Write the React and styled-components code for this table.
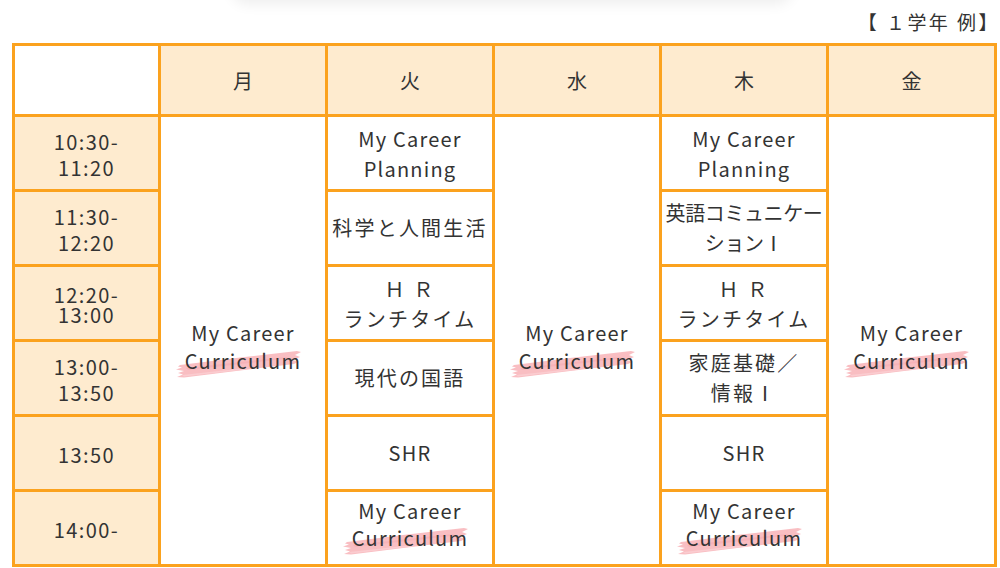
import React from "react";
import styled, { createGlobalStyle } from "styled-components";

const Global = createGlobalStyle`
  html, body { margin: 0; padding: 0; background: #fff; }
  body {
    font-family: "Noto Sans CJK JP", "Noto Sans", sans-serif;
    color: #333;
    overflow: hidden;
  }
`;

const ORANGE = "#FBA21E";
const PEACH = "#FEEBCF";

const Page = styled.div`
  width: 1000px;
  height: 568px;
  overflow: hidden;
  position: relative;
`;

const TopShade = styled.div`
  width: 560px;
  height: 30px;
  margin: -30px 0 0 232px;
  border-radius: 20px;
  box-shadow: 0 4px 14px rgba(0, 0, 0, 0.07);
`;

const Caption = styled.div`
  text-align: right;
  font-size: 19px;
  line-height: 24px;
  padding: 10px 0 9px 0;
  letter-spacing: 0.13em;
`;

const TableWrap = styled.div`
  padding-left: 12px;
`;

const Table = styled.table`
  border-collapse: collapse;
  table-layout: fixed;
  width: 982px;
  border: 3px solid ${ORANGE};
`;

const HeadRow = styled.tr`
  height: 71px;
`;

const BodyRow = styled.tr`
  height: 75px;
`;

const HeadCell = styled.th`
  background: ${({ $blank }) => ($blank ? "#fff" : PEACH)};
  border: 3px solid ${ORANGE};
  padding: 1px 0 0;
  font-weight: 400;
  font-size: 20px;
  text-align: center;
  vertical-align: middle;
`;

const TimeCell = styled.td`
  background: ${PEACH};
  border: 3px solid ${ORANGE};
  padding: 3px 0 0;
  text-align: center;
  vertical-align: middle;
  font-size: 20px;
  line-height: ${({ $tight }) => ($tight ? "20px" : "26px")};
  letter-spacing: 0.07em;
`;

const Cell = styled.td`
  background: #fff;
  border: 3px solid ${ORANGE};
  padding: ${({ $pt = 0, $pb = 0 }) => `${$pt}px 0 ${$pb}px`};
  text-align: center;
  vertical-align: middle;
  font-size: 20px;
  line-height: ${({ $lh }) => $lh || 30}px;
  letter-spacing: ${({ $ls }) => $ls || "0.06em"};
  white-space: nowrap;
`;

const Mark = styled.span`
  position: relative;
  display: inline-block;
  isolation: isolate;
`;

const Brush = styled.svg`
  position: absolute;
  left: -10px;
  top: 2px;
  width: 128px;
  height: 30px;
  z-index: -1;
`;

const Highlight = ({ children }) => (
  <Mark>
    <Brush viewBox="0 0 126 30" aria-hidden="true">
      <path
        d="M4 16 L60 9 L121 2 L125 3 L119 6 L124 8 L117 11 L122 13 L118 15 L60 22 L8 28.5 L1 28 L7 25.5 L2 24 L8 22 L0 20.5 L6 18.5 L2 17.5 Z"
        fill="#F8B3B7"
        opacity="0.85"
      />
      <path d="M10 19 L110 8 L112 9.5 L12 21 Z" fill="#F39DA4" opacity="0.3" />
      <path d="M6 26 L70 19 L70 20.5 L8 27.5 Z" fill="#FBD0D3" opacity="0.8" />
    </Brush>
    {children}
  </Mark>
);

const Curriculum = () => (
  <Cell rowSpan={6} $pt={12} $lh={28}>
    My Career
    <br />
    <Highlight>Curriculum</Highlight>
  </Cell>
);

const JA = "0.11em";

export default function App() {
  return (
    <Page>
      <Global />
      <TopShade />
      <Caption>【 １学年 例】</Caption>
      <TableWrap>
        <Table>
          <colgroup>
            <col style={{ width: 146 }} />
            <col style={{ width: 167 }} />
            <col style={{ width: 167 }} />
            <col style={{ width: 167 }} />
            <col style={{ width: 167 }} />
            <col style={{ width: 168 }} />
          </colgroup>
          <thead>
            <HeadRow>
              <HeadCell $blank />
              <HeadCell>月</HeadCell>
              <HeadCell>火</HeadCell>
              <HeadCell>水</HeadCell>
              <HeadCell>木</HeadCell>
              <HeadCell>金</HeadCell>
            </HeadRow>
          </thead>
          <tbody>
            <BodyRow>
              <TimeCell>
                10:30-
                <br />
                11:20
              </TimeCell>
              <Curriculum />
              <Cell $pt={2}>
                My Career
                <br />
                Planning
              </Cell>
              <Curriculum />
              <Cell $pt={2}>
                My Career
                <br />
                Planning
              </Cell>
              <Curriculum />
            </BodyRow>
            <BodyRow>
              <TimeCell>
                11:30-
                <br />
                12:20
              </TimeCell>
              <Cell $ls={JA}>科学と人間生活</Cell>
              <Cell $ls="-0.02em">
                英語コミュニケー
                <br />
                ションⅠ
              </Cell>
            </BodyRow>
            <BodyRow>
              <TimeCell $tight>
                12:20-
                <br />
                13:00
              </TimeCell>
              <Cell $ls={JA} $pt={2}>
                Ｈ Ｒ
                <br />
                ランチタイム
              </Cell>
              <Cell $ls={JA} $pt={2}>
                Ｈ Ｒ
                <br />
                ランチタイム
              </Cell>
            </BodyRow>
            <BodyRow>
              <TimeCell>
                13:00-
                <br />
                13:50
              </TimeCell>
              <Cell $ls={JA}>現代の国語</Cell>
              <Cell $ls={JA}>
                家庭基礎／
                <br />
                情報Ⅰ
              </Cell>
            </BodyRow>
            <BodyRow>
              <TimeCell>13:50</TimeCell>
              <Cell>SHR</Cell>
              <Cell>SHR</Cell>
            </BodyRow>
            <BodyRow>
              <TimeCell>14:00-</TimeCell>
              <Cell $lh={27} $pb={8}>
                My Career
                <br />
                <Highlight>Curriculum</Highlight>
              </Cell>
              <Cell $lh={27} $pb={8}>
                My Career
                <br />
                <Highlight>Curriculum</Highlight>
              </Cell>
            </BodyRow>
          </tbody>
        </Table>
      </TableWrap>
    </Page>
  );
}
